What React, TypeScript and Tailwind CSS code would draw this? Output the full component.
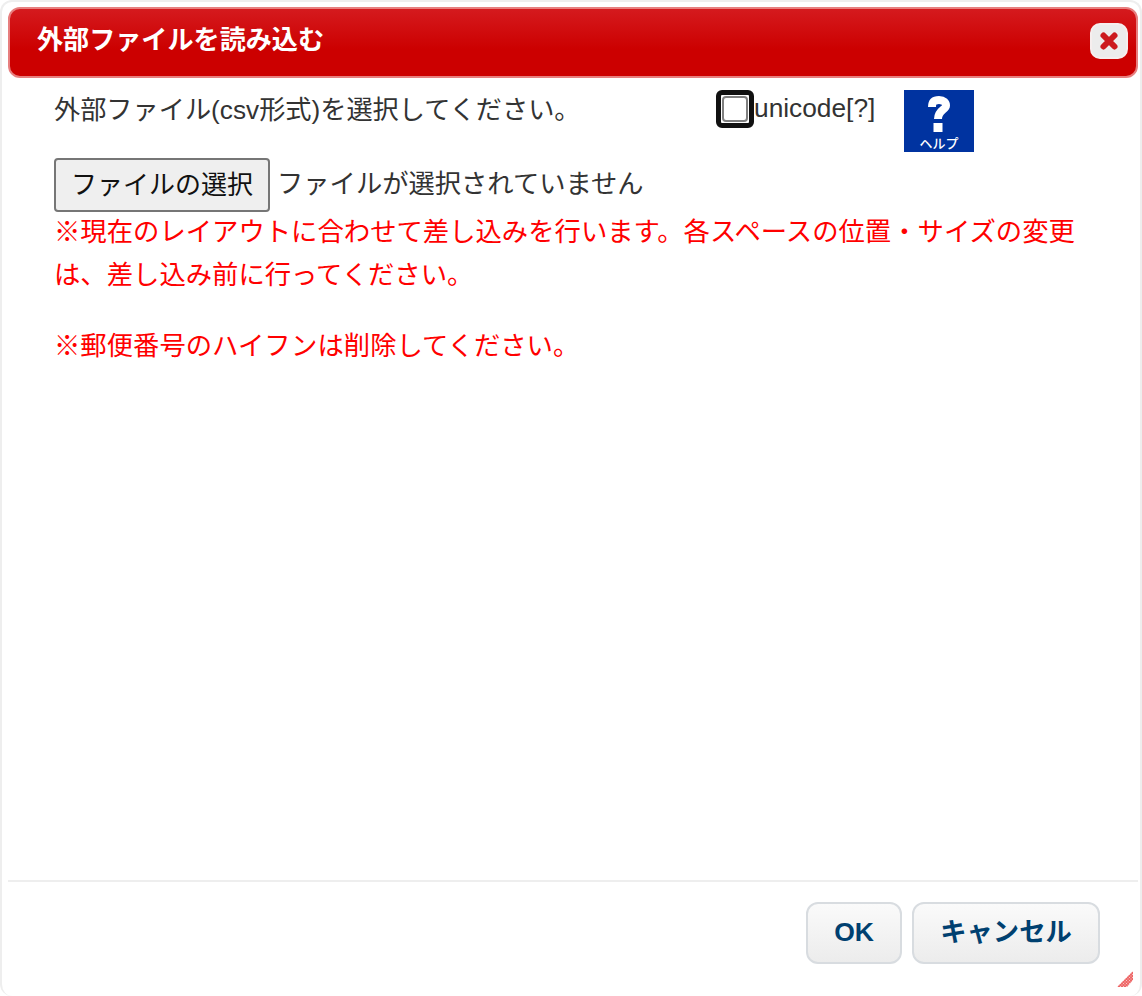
const FONT = "font-['Liberation_Sans','Noto_Sans_CJK_JP',sans-serif]";

function TitleBar() {
  return (
    <div className="ml-[6px] mr-[2px] mt-[5px] flex h-[71px] items-center justify-between rounded-xl border-2 border-[#e77f7f] bg-[linear-gradient(#d51a1e,#cc0000_60%)] pb-1 pl-[27px] pr-2">
      <span className="text-[26.1px] font-bold text-white">外部ファイルを読み込む</span>
      <button className="flex h-9 w-[38px] items-center justify-center rounded-[10px] border-2 border-[#f6eeee] bg-[#ececec]">
        <svg className="blur-[0.6px]" width="22" height="22" viewBox="0 0 22 22">
          <path d="M5.5 5.5L16.5 16.5M16.5 5.5L5.5 16.5" stroke="#cc1a1e" strokeWidth="6" strokeLinecap="round" />
        </svg>
      </button>
    </div>
  );
}

function HelpIcon() {
  return (
    <div className="flex h-[62px] w-[70px] flex-col items-center bg-[#0033a0] text-white">
      <svg width="70" height="47" viewBox="0 0 70 47">
        <path d="M28 17C28 12 30 10 35 10C40 10 42 12.5 42 15.5C42 20 34 20 34 29" fill="none" stroke="#ffffff" strokeWidth="8" />
        <rect x="29.5" y="33" width="9" height="9" fill="#ffffff" />
      </svg>
      <span className="text-[13px] font-medium leading-[14px]">ヘルプ</span>
    </div>
  );
}

function ResizeGrip() {
  return (
    <svg className="absolute bottom-[9px] right-[7px]" width="16" height="16" viewBox="0 0 16 16">
      <defs>
        <pattern id="grip" width="3" height="3" patternUnits="userSpaceOnUse">
          <rect width="3" height="3" fill="#ee6666" />
          <rect width="1" height="1" fill="#f9c4c4" />
          <rect x="1.5" y="1.5" width="1" height="1" fill="#f9c4c4" />
        </pattern>
      </defs>
      <path d="M16 0L0 16H10L16 9Z" fill="url(#grip)" />
    </svg>
  );
}

export default function App() {
  return (
    <div className={`${FONT} relative flex h-[996px] w-[1142px] flex-col rounded-xl border-2 border-b-0 border-[#eeeeee] bg-white text-[#333333]`}>
      <TitleBar />
      <div className="flex-1 pl-[52px] pr-[60px] text-[26.3px]">
        <div className="flex h-[80px] pt-[12px]">
          <span className="w-[662px] text-[26.2px] leading-[40px]">外部ファイル(csv形式)を選択してください。</span>
          <span className="box-border h-[38px] w-[38px] rounded-md border-[5px] border-[#111111] p-px">
            <span className="block h-full w-full rounded border-2 border-[#808080] bg-white" />
          </span>
          <span className="w-[150px] leading-[36px]">unicode[?]</span>
          <HelpIcon />
        </div>
        <div className="flex items-center gap-2">
          <button className="h-[54px] w-[216px] rounded-[4px] border-2 border-[#767676] bg-[#efefef] text-[26px] text-[#111111]">ファイルの選択</button>
          <span className="-ml-px">ファイルが選択されていません</span>
        </div>
        <div className="-mt-px text-[26.35px] leading-[43px] text-[#ff0000]">
          <p>※現在のレイアウトに合わせて差し込みを行います。各スペースの位置・サイズの変更は、差し込み前に行ってください。</p>
          <p className="mt-[28px]">※郵便番号のハイフンは削除してください。</p>
        </div>
      </div>
      <div className="ml-[6px] mr-[2px] flex h-[116px] justify-end gap-[10px] border-t-2 border-[#eeeeee] pr-[38px] pt-[20px]">
        <button className="h-[62px] w-[96px] rounded-xl border-2 border-[#d8dce0] bg-[linear-gradient(#fafafa,#ececec)] text-[26.5px] font-bold text-[#004070]">OK</button>
        <button className="h-[62px] w-[188px] rounded-xl border-2 border-[#d8dce0] bg-[linear-gradient(#fafafa,#ececec)] text-[26.3px] font-bold text-[#004070]">キャンセル</button>
      </div>
      <ResizeGrip />
    </div>
  );
}
